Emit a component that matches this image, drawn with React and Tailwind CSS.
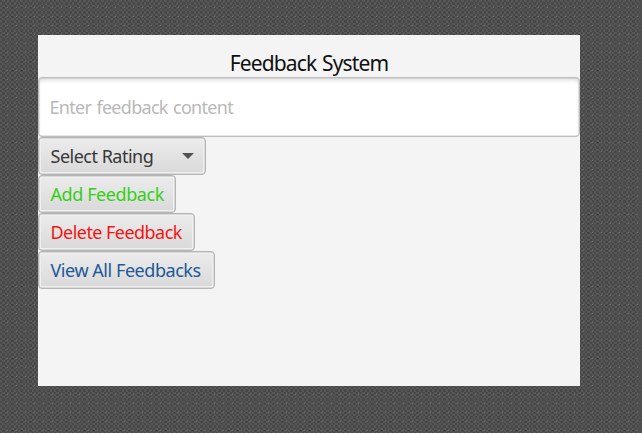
const buttonFrame =
  'flex h-[38px] items-center rounded-[4px] border border-[#b5b5b5] bg-linear-to-b from-[#ececec] to-[#d9d9d9] pl-[11.5px] text-left whitespace-nowrap shadow-[inset_0_0_0_0.5px_#c4c4c4,inset_0_0_0_2px_#efefef]';

function WovenBackdrop() {
  return (
    <svg className="absolute inset-0 h-full w-full" shapeRendering="crispEdges" aria-hidden="true">
      <defs>
        <pattern id="weave" width="9" height="9" patternUnits="userSpaceOnUse">
          <rect width="9" height="9" fill="#575757" />
          <path
            fill="#484848"
            d="M0 0h2v2h-2zM5 0h2v2h-2zM2 2h3v3h-3zM7 2h2v3h-2zM0 5h2v2h-2zM5 5h2v2h-2zM2 7h3v2h-3zM7 7h2v2h-2z"
          />
          <path fill="#3d3d3d" d="M3 7h1v1h-1z" />
          <path fill="#6c6c6c" d="M7 7h1v1h-1z" />
        </pattern>
      </defs>
      <rect width="100%" height="100%" fill="url(#weave)" />
    </svg>
  );
}

export default function App() {
  return (
    <div className="relative h-[433px] w-[642px] overflow-hidden bg-[#505050] pt-[35px] pl-[38px] font-['Noto_Sans','Open_Sans',sans-serif]">
      <WovenBackdrop />
      <main className="relative flex h-[351px] w-[542px] flex-col items-start bg-[#f4f4f4] pt-[14px] text-[18px] tracking-[-0.5px] [word-spacing:1.2px]">
        <h1 className="h-[28px] w-full text-center text-[21px] leading-[29px] tracking-[-0.88px] text-[#101010]">
          <span>Feedback System</span>
        </h1>
        <input
          aria-label="Feedback content"
          placeholder="Enter feedback content"
          className="h-[60px] w-full rounded-[4px] border border-[#bdbdbd] bg-white px-[10.5px] pb-[1px] tracking-[-0.7px] shadow-[inset_0_0_0_0.5px_#cccccc,inset_0_3px_5px_-2px_#c8c8c8] outline-none [word-spacing:1.2px] placeholder:text-[#b8b8b8]"
        />
        <button className={`${buttonFrame} w-[168px] text-[#373737]`}>
          <span>Select Rating</span>
          <svg className="mr-[11px] mb-[1px] ml-auto h-[6px] w-[12px] fill-[#525252]" viewBox="0 0 12 6">
            <path d="M0 0H12L6 6Z" />
          </svg>
        </button>
        <button className={`${buttonFrame} w-[138px] tracking-[-0.42px] text-[#35cf18]`}>
          <span>Add Feedback</span>
        </button>
        <button className={`${buttonFrame} w-[157px] tracking-[-0.55px] text-[#f51414]`}>
          <span>Delete Feedback</span>
        </button>
        <button className={`${buttonFrame} w-[177px] tracking-[-0.45px] text-[#215999]`}>
          <span>View All Feedbacks</span>
        </button>
      </main>
    </div>
  );
}
